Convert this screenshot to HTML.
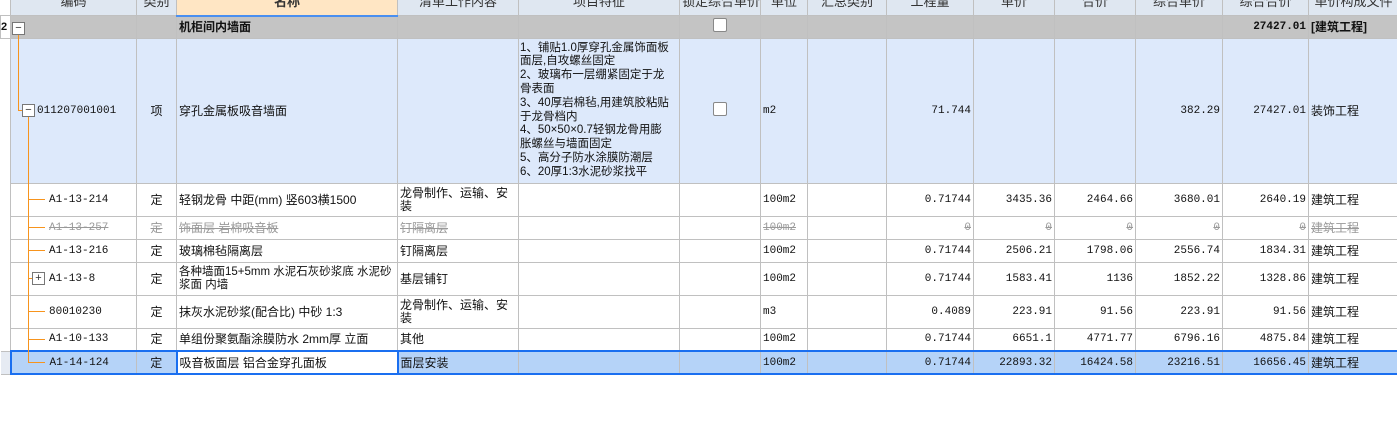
<!DOCTYPE html>
<html><head><meta charset="utf-8"><style>
body{margin:0;width:1397px;height:422px;overflow:hidden;background:#fff;font-family:"Liberation Sans","Noto Sans CJK SC",sans-serif;font-size:12px;color:#111;position:relative}
table{border-collapse:collapse;table-layout:fixed;position:absolute;left:0;top:0;width:1398px}
td{border:1px solid #c0c0c0;padding:0 2px;overflow:hidden;white-space:nowrap;vertical-align:middle;line-height:14px}
.h td{background:#dfe7f1;text-align:center;height:15px;color:#333;line-height:12px;vertical-align:top;font-size:13px;border-top:none}
.h td span{position:relative;top:-4px}
.h td.nm{background:#ffe6c4;font-weight:bold;border-bottom:2px solid #4a8ff0;height:14px}
.g td{background:#c4c4c4;height:21px;font-weight:bold}
.it td{background:#dde9fb;height:144px}
.n{text-align:right;font-family:"Liberation Mono","Noto Sans CJK SC",monospace;font-size:11px}
.c{text-align:center}
.code{padding-left:38px;font-family:"Liberation Mono",monospace;font-size:11px}
.del td{color:#999;text-decoration:line-through}
.sel td{background:#b5d3f8;border-top:2px solid #1a6ff0;border-bottom:2px solid #1a6ff0}
.sel td.nm2{background:#fff;border:2px solid #1a6ff0}
.cb{display:inline-block;width:12px;height:12px;border:1px solid #888;background:#fff;border-radius:2px}
.ln{position:absolute;background:#f7941d}
.bx{position:absolute;width:11px;height:11px;border:1px solid #777;background:#fff;font-size:11px;line-height:10px;text-align:center;color:#333}
.r0{border-top:none;border-bottom:none;border-left:none}
</style></head><body>
<table>
<colgroup><col style="width:10px"><col style="width:126px"><col style="width:40px"><col style="width:221px"><col style="width:121px"><col style="width:161px"><col style="width:81px"><col style="width:47px"><col style="width:79px"><col style="width:87px"><col style="width:81px"><col style="width:81px"><col style="width:87px"><col style="width:86px"><col style="width:90px"></colgroup>
<tr class="h"><td style="background:#fff;border:none;border-right:1px solid #c0c0c0"></td><td><span>编码</span></td><td><span>类别</span></td><td class="nm"><span>名称</span></td><td><span>清单工作内容</span></td><td><span>项目特征</span></td><td><span>锁定综合单价</span></td><td><span>单位</span></td><td><span>汇总类别</span></td><td><span>工程量</span></td><td><span>单价</span></td><td><span>合价</span></td><td><span>综合单价</span></td><td><span>综合合价</span></td><td><span>单价构成文件</span></td></tr>
<tr class="g"><td style="background:#fff;padding:0;font-size:11px">2</td><td></td><td></td><td>机柜间内墙面</td><td></td><td></td><td class="c"><span class="cb"></span></td><td></td><td></td><td></td><td></td><td></td><td></td><td class="n">27427.01</td><td>[建筑工程]</td></tr>
<tr class="it"><td class="r0" style="background:#fff"></td><td style="padding-left:26px;font-family:'Liberation Mono',monospace;font-size:11px">011207001001</td><td class="c">项</td><td>穿孔金属板吸音墙面</td><td></td><td style="font-size:11.5px;line-height:13.8px;padding-left:1px">1、铺贴1.0厚穿孔金属饰面板<br>面层,自攻螺丝固定<br>2、玻璃布一层绷紧固定于龙<br>骨表面<br>3、40厚岩棉毡,用建筑胶粘贴<br>于龙骨档内<br>4、50×50×0.7轻钢龙骨用膨<br>胀螺丝与墙面固定<br>5、高分子防水涂膜防潮层<br>6、20厚1:3水泥砂浆找平</td><td class="c"><span class="cb"></span></td><td class="n" style="text-align:left">m2</td><td></td><td class="n">71.744</td><td></td><td></td><td class="n">382.29</td><td class="n">27427.01</td><td>装饰工程</td></tr>
<tr style="height:33px"><td class="r0"></td><td class="code">A1-13-214</td><td class="c">定</td><td>轻钢龙骨 中距(mm) 竖603横1500</td><td style="line-height:13px">龙骨制作、运输、安<br>装</td><td></td><td></td><td class="n" style="text-align:left">100m2</td><td></td><td class="n">0.71744</td><td class="n">3435.36</td><td class="n">2464.66</td><td class="n">3680.01</td><td class="n">2640.19</td><td>建筑工程</td></tr>
<tr class="del" style="height:23px"><td class="r0"></td><td class="code">A1-13-257</td><td class="c">定</td><td>饰面层 岩棉吸音板</td><td>钉隔离层</td><td></td><td></td><td class="n" style="text-align:left">100m2</td><td></td><td class="n">0</td><td class="n">0</td><td class="n">0</td><td class="n">0</td><td class="n">0</td><td>建筑工程</td></tr>
<tr style="height:23px"><td class="r0"></td><td class="code">A1-13-216</td><td class="c">定</td><td>玻璃棉毡隔离层</td><td>钉隔离层</td><td></td><td></td><td class="n" style="text-align:left">100m2</td><td></td><td class="n">0.71744</td><td class="n">2506.21</td><td class="n">1798.06</td><td class="n">2556.74</td><td class="n">1834.31</td><td>建筑工程</td></tr>
<tr style="height:33px"><td class="r0"></td><td class="code">A1-13-8</td><td class="c">定</td><td style="line-height:13px;font-size:11.5px">各种墙面15+5mm 水泥石灰砂浆底 水泥砂<br>浆面 内墙</td><td>基层铺钉</td><td></td><td></td><td class="n" style="text-align:left">100m2</td><td></td><td class="n">0.71744</td><td class="n">1583.41</td><td class="n">1136</td><td class="n">1852.22</td><td class="n">1328.86</td><td>建筑工程</td></tr>
<tr style="height:33px"><td class="r0"></td><td class="code">80010230</td><td class="c">定</td><td>抹灰水泥砂浆(配合比) 中砂 1:3</td><td style="line-height:13px">龙骨制作、运输、安<br>装</td><td></td><td></td><td class="n" style="text-align:left">m3</td><td></td><td class="n">0.4089</td><td class="n">223.91</td><td class="n">91.56</td><td class="n">223.91</td><td class="n">91.56</td><td>建筑工程</td></tr>
<tr style="height:23px"><td class="r0"></td><td class="code">A1-10-133</td><td class="c">定</td><td>单组份聚氨酯涂膜防水 2mm厚 立面</td><td>其他</td><td></td><td></td><td class="n" style="text-align:left">100m2</td><td></td><td class="n">0.71744</td><td class="n">6651.1</td><td class="n">4771.77</td><td class="n">6796.16</td><td class="n">4875.84</td><td>建筑工程</td></tr>
<tr class="sel" style="height:23px"><td style="background:#e6ebf3;border-top:1px solid #c0c0c0;border-bottom:1px solid #c0c0c0;border-left:none"></td><td class="code" style="border-left:2px solid #1a6ff0">A1-14-124</td><td class="c">定</td><td class="nm2">吸音板面层 铝合金穿孔面板</td><td>面层安装</td><td></td><td></td><td class="n" style="text-align:left">100m2</td><td></td><td class="n">0.71744</td><td class="n">22893.32</td><td class="n">16424.58</td><td class="n">23216.51</td><td class="n">16656.45</td><td>建筑工程</td></tr>
</table>
<div class="ln" style="left:18px;top:34px;width:1px;height:77px"></div>
<div class="ln" style="left:18px;top:110px;width:5px;height:1px"></div>
<div class="ln" style="left:28px;top:116px;width:1px;height:247px"></div>
<div class="ln" style="left:28px;top:199px;width:17px;height:1px"></div>
<div class="ln" style="left:28px;top:227px;width:17px;height:1px"></div>
<div class="ln" style="left:28px;top:250px;width:17px;height:1px"></div>
<div class="ln" style="left:28px;top:278px;width:4px;height:1px"></div>
<div class="ln" style="left:28px;top:311px;width:17px;height:1px"></div>
<div class="ln" style="left:28px;top:339px;width:17px;height:1px"></div>
<div class="ln" style="left:28px;top:362px;width:17px;height:1px"></div>
<div class="bx" style="left:12px;top:22px">−</div>
<div class="bx" style="left:22px;top:104px">−</div>
<div class="bx" style="left:32px;top:272px">+</div>
</body></html>
